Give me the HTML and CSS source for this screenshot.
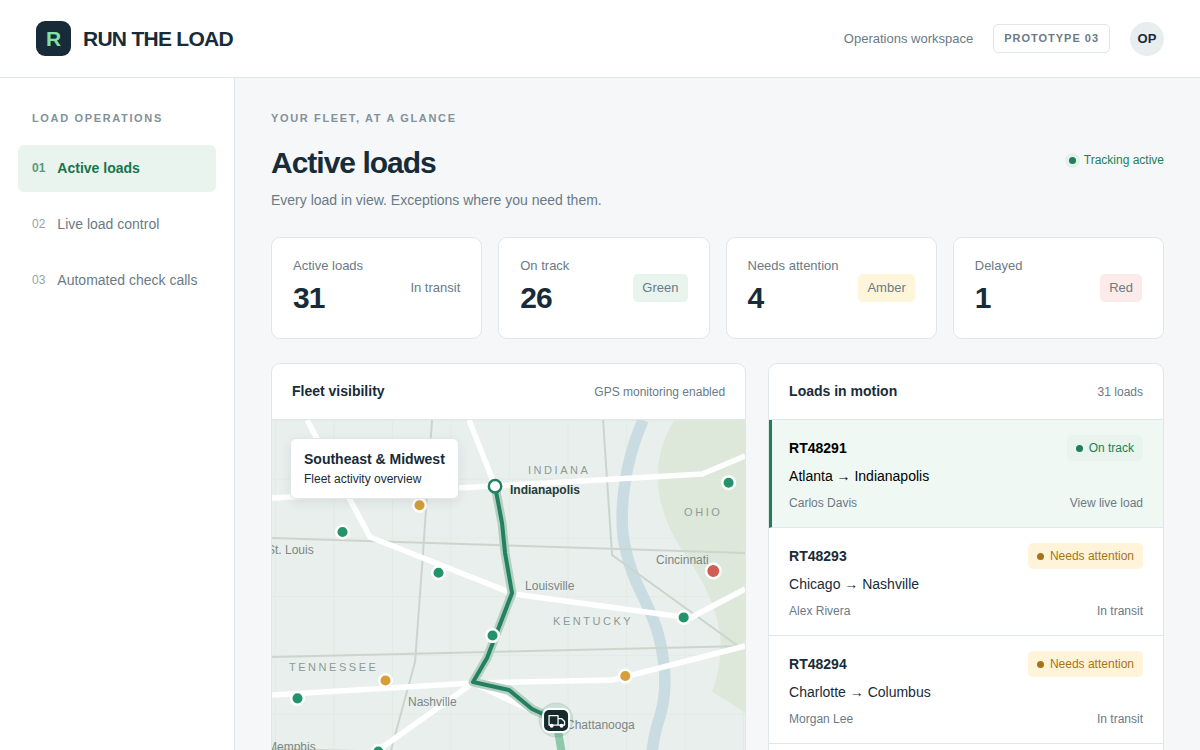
FILE: index.html
```html
<!DOCTYPE html>
<html lang="en">
<head>
<meta charset="utf-8">
<meta name="viewport" content="width=device-width, initial-scale=1">
<title>Run the Load</title>
<link rel="stylesheet" href="styles.css">
</head>
<body>
<header class="topbar">
  <div class="brand"><span class="brand-mark">R</span><span class="brand-name">RUN THE LOAD</span></div>
  <div class="topbar-side">
    <span class="workspace">Operations workspace</span>
    <span class="stage">PROTOTYPE 03</span>
    <span class="avatar">OP</span>
  </div>
</header>
<div class="shell">
  <aside class="sidebar">
    <p class="eyebrow sidebar-label">LOAD OPERATIONS</p>
    <nav class="nav">
      <a class="nav-item is-active" href="#active"><span class="nav-num">01</span>Active loads</a>
      <a class="nav-item" href="#live"><span class="nav-num">02</span>Live load control</a>
      <a class="nav-item" href="#calls"><span class="nav-num">03</span>Automated check calls</a>
    </nav>
  </aside>
  <main class="main">
    <p class="eyebrow">YOUR FLEET, AT A GLANCE</p>
    <div class="heading">
      <div>
        <h1 class="title">Active loads</h1>
        <p class="subtitle">Every load in view. Exceptions where you need them.</p>
      </div>
      <span class="tracking"><i class="pulse"></i>Tracking active</span>
    </div>
    <section class="stats">
      <article class="stat"><div><p class="stat-label">Active loads</p><strong class="stat-value">31</strong></div><span class="stat-note">In transit</span></article>
      <article class="stat"><div><p class="stat-label">On track</p><strong class="stat-value">26</strong></div><span class="stat-note tag green">Green</span></article>
      <article class="stat"><div><p class="stat-label">Needs attention</p><strong class="stat-value">4</strong></div><span class="stat-note tag amber">Amber</span></article>
      <article class="stat"><div><p class="stat-label">Delayed</p><strong class="stat-value">1</strong></div><span class="stat-note tag red">Red</span></article>
    </section>
    <section class="panels">
      <article class="panel">
        <div class="panel-head"><h2 class="panel-title">Fleet visibility</h2><span class="panel-note">GPS monitoring enabled</span></div>
        <div class="map">
          <svg class="map-art" viewBox="272 420 473 430" preserveAspectRatio="xMinYMin slice" role="img" aria-label="Fleet map">
            <defs>
              <pattern id="grid" x="275" y="420" width="58.5" height="58.7" patternUnits="userSpaceOnUse">
                <path class="grid-line" d="M.5 0V59M0 .5H59"/>
              </pattern>
            </defs>
            <rect class="land" x="272" y="420" width="473" height="430"/>
            <path class="forest" d="M674 420C651 459 650 502 685 555C702 577 716 606 720 634C722 655 718 675 712 692Q729 701 745 713V420Z"/>
            <rect x="272" y="420" width="473" height="430" fill="url(#grid)"/>
            <path class="river" d="M643 420C624 463 617 517 626 551C633 585 651 605 659 637C665 663 668 688 660 716Q653 736 651 760"/>
            <g class="minor">
              <path d="M432 420L423 553L415 662L391 750L380 790"/>
              <path d="M272 538L745 553"/>
              <path d="M603 420L612 555L738 646"/>
              <path d="M272 657L745 646"/>
              <path d="M272 749L400 752"/>
            </g>
            <g class="major">
              <path d="M272 498L495 486L702 474L745 456"/>
              <path d="M307 420L370 537L514 594L690 618L745 589"/>
              <path d="M469 420L495 486"/>
              <path d="M272 695L473 683L612 680L745 646"/>
              <path d="M473 683L370 756"/>
              <path d="M473 683L556 722"/>
            </g>
            <path class="ahead" d="M556 720L563 760"/>
            <path class="route-halo" d="M495 486L502 523L505 553L512 593L487 658L473 682L509 690L532 709L556 720"/>
            <path class="route" d="M495 486L502 523L505 553L512 593L487 658L473 682L509 690L532 709L556 720"/>
            <g class="state">
              <text x="528" y="474">INDIANA</text>
              <text x="684" y="516">OHIO</text>
              <text x="553" y="625">KENTUCKY</text>
              <text x="289" y="671">TENNESSEE</text>
            </g>
            <g class="city">
              <text x="267" y="554">St. Louis</text>
              <text x="656" y="564">Cincinnati</text>
              <text x="525" y="590">Louisville</text>
              <text x="408" y="706">Nashville</text>
              <text x="566" y="729">Chattanooga</text>
              <text x="267" y="751">Memphis</text>
              <text class="city-main" x="510" y="494">Indianapolis</text>
            </g>
            <g class="dot dot-green">
              <circle cx="342.500" cy="532" r="6.300"/><circle cx="438.500" cy="572.700" r="6.300"/><circle cx="492.500" cy="635.500" r="6.300"/>
              <circle cx="728.500" cy="482.700" r="6.300"/><circle cx="683.600" cy="617.400" r="6.300"/><circle cx="297.500" cy="698.300" r="6.300"/><circle cx="378.300" cy="751.500" r="6.300"/>
            </g>
            <g class="dot dot-amber"><circle cx="419.500" cy="505.200" r="6.300"/><circle cx="385.500" cy="680.500" r="6.300"/><circle cx="625.200" cy="676" r="6.300"/></g>
            <g class="dot dot-red"><circle cx="713.200" cy="571" r="7.200"/></g>
            <circle class="origin" cx="495" cy="486.300" r="6.200"/>
            <circle class="truck-halo" cx="556" cy="720" r="17"/>
            <rect class="truck-box" x="543" y="709" width="26" height="23" rx="6"/>
            <g class="truck">
              <path d="M549 715.500H558V725H549ZM558 718.500H561.500L564.500 721.500V725H558"/>
              <circle cx="551.600" cy="725.700" r="1.300"/><circle cx="561.500" cy="725.700" r="1.300"/>
            </g>
          </svg>
          <div class="map-card"><strong class="map-card-title">Southeast &amp; Midwest</strong><span class="map-card-note">Fleet activity overview</span></div>
        </div>
      </article>
      <article class="panel">
        <div class="panel-head"><h2 class="panel-title">Loads in motion</h2><span class="panel-note">31 loads</span></div>
        <button class="load is-selected" type="button">
          <span class="load-line load-top"><strong>RT48291</strong><span class="badge badge-green"><i class="bullet"></i>On track</span></span>
          <span class="load-route">Atlanta → Indianapolis</span>
          <span class="load-line load-meta"><span>Carlos Davis</span><span>View live load</span></span>
        </button>
        <button class="load" type="button">
          <span class="load-line load-top"><strong>RT48293</strong><span class="badge badge-amber"><i class="bullet"></i>Needs attention</span></span>
          <span class="load-route">Chicago → Nashville</span>
          <span class="load-line load-meta"><span>Alex Rivera</span><span>In transit</span></span>
        </button>
        <button class="load" type="button">
          <span class="load-line load-top"><strong>RT48294</strong><span class="badge badge-amber"><i class="bullet"></i>Needs attention</span></span>
          <span class="load-route">Charlotte → Columbus</span>
          <span class="load-line load-meta"><span>Morgan Lee</span><span>In transit</span></span>
        </button>
      </article>
    </section>
  </main>
</div>
</body>
</html>
```
FILE: styles.css
```css
* { box-sizing: border-box; }
body {
  margin: 0;
  min-height: 100vh;
  display: flex;
  flex-direction: column;
  background: #f5f7f9;
  color: #182b38;
  font: 14px/16px "Liberation Sans", Arial, sans-serif;
}
p, h1, h2 { margin: 0; }

.topbar {
  display: flex;
  align-items: center;
  justify-content: space-between;
  min-height: 78px;
  padding: 0 36px;
  background: #fff;
  border-bottom: 1px solid #e1e6ea;
}
.brand { display: flex; align-items: center; gap: 12px; }
.brand-mark {
  display: grid;
  place-items: center;
  width: 35px;
  height: 35px;
  border-radius: 9px;
  background: #182b38;
  color: #7ee2a8;
  font-size: 21px;
  font-weight: 700;
}
.brand-name { font-size: 21px; line-height: 24px; font-weight: 700; letter-spacing: -0.035em; }
.topbar-side { display: flex; align-items: center; gap: 20px; }
.workspace { color: #6b7a86; font-size: 13px; }
.stage {
  padding: 6px 10px;
  border: 1px solid #dfe5e9;
  border-radius: 5px;
  color: #6b7a86;
  font-size: 11px;
  line-height: 15px;
  font-weight: 700;
  letter-spacing: 0.09em;
}
.avatar {
  display: grid;
  place-items: center;
  width: 34px;
  height: 34px;
  border-radius: 50%;
  background: #e8edf0;
  font-size: 13px;
  font-weight: 700;
}

.shell { flex: 1; display: grid; grid-template-columns: 235px minmax(0, 1fr); }
.sidebar { padding: 34px 18px; background: #fff; border-right: 1px solid #dfe5ea; }
.eyebrow { color: #83919b; font-size: 11px; line-height: 13px; font-weight: 700; letter-spacing: 0.15em; }
.sidebar-label { padding: 0 14px; }
.nav { display: grid; gap: 9px; margin-top: 20px; }
.nav-item {
  display: flex;
  align-items: center;
  gap: 12px;
  padding: 15px 14px 16px;
  border-radius: 6px;
  color: #6b7a86;
  text-decoration: none;
}
.nav-num { font-size: 12px; opacity: 0.7; }
.nav-item.is-active { background: #e8f4ed; color: #19734d; font-weight: 700; }

.main { padding: 34px 36px; }
.heading { display: flex; justify-content: space-between; align-items: flex-start; margin-top: 20px; }
.title { font-size: 30px; line-height: 36px; letter-spacing: -1px; }
.subtitle { margin-top: 11px; color: #6b7a86; }
.tracking { display: flex; align-items: center; gap: 8px; padding-top: 7px; color: #1d8058; font-size: 12px; }
.pulse { width: 7px; height: 7px; border-radius: 50%; background: #1d8058; box-shadow: 0 0 0 4px #e2f2ea; }

.stats { display: grid; grid-template-columns: repeat(4, minmax(0, 1fr)); gap: 16px; margin-top: 29px; }
.stat {
  display: flex;
  align-items: center;
  justify-content: space-between;
  padding: 20px 21px;
  background: #fff;
  border: 1px solid #e1e6ea;
  border-radius: 9px;
}
.stat-label { color: #6b7a86; font-size: 13px; }
.stat-value { display: block; margin: 6px 0 2px; font-size: 30px; line-height: 36px; letter-spacing: -1px; }
.stat-note { color: #6b7a86; font-size: 13px; }
.tag { padding: 6px 9px; border-radius: 5px; }
.green { background: #e8f4ed; }
.amber { background: #fff5db; }
.red { background: #fcebe9; }

.panels { display: grid; grid-template-columns: minmax(0, 6fr) minmax(0, 5fr); gap: 22px; margin-top: 24px; }
.panel { overflow: hidden; background: #fff; border: 1px solid #e1e6ea; border-radius: 9px; }
.panel-head {
  display: flex;
  align-items: baseline;
  justify-content: space-between;
  padding: 19px 20px 19px;
  border-bottom: 1px solid #e1e6ea;
}
.panel-title { font-size: 14px; }
.panel-note { color: #6b7a86; font-size: 12px; }

.map { position: relative; }
.map-art { display: block; width: 100%; height: 430px; }
.land { fill: #e9efec; }
.grid-line { stroke: #dde8e2; stroke-width: 1; opacity: 0.6; fill: none; }
.forest { fill: #dde8da; }
.river { fill: none; stroke: #c8dce1; stroke-width: 11.500px; }
.minor { fill: none; stroke: #cbd5ce; stroke-width: 2; stroke-linejoin: round; }
.major { fill: none; stroke: #fff; stroke-width: 5.500px; stroke-linejoin: round; }
.route-halo, .route, .ahead { fill: none; stroke-linejoin: round; stroke-linecap: round; }
.route-halo { stroke: #b4d0c1; stroke-width: 9; }
.route { stroke: #238060; stroke-width: 4; }
.ahead { stroke: #8fc8ab; stroke-width: 8; }
.state { fill: #8d9a97; font-size: 11px; letter-spacing: 0.23em; }
.city { fill: #7b8784; font-size: 12px; }
.city-main { fill: #263b37; font-weight: 700; }
.dot { stroke: #fff; stroke-width: 2.500px; }
.dot-green { fill: #23946a; }
.dot-amber { fill: #d69f39; }
.dot-red { fill: #d15d54; }
.origin { fill: #fff; stroke: #238060; stroke-width: 2.500px; }
.truck-halo { fill: #238060; fill-opacity: 0.14; stroke: #238060; stroke-opacity: 0.12; }
.truck-box { fill: #152b2d; stroke: #fff; stroke-width: 2; }
.truck { fill: none; stroke: #fff; stroke-width: 1.300px; stroke-linejoin: round; }
.truck circle { fill: #fff; }
.map-card {
  position: absolute;
  top: 18px;
  left: 18px;
  display: grid;
  gap: 5px;
  padding: 12px 13px;
  background: #fff;
  border: 1px solid #e1e6ea;
  border-radius: 6px;
  box-shadow: 0 4px 12px rgba(24, 43, 56, 0.08);
}
.map-card-note { font-size: 12px; line-height: 14px; }

.load {
  display: grid;
  width: 100%;
  padding: 15px 20px 17px;
  border: 0;
  border-bottom: 1px solid #e1e6ea;
  background: #fff;
  color: #182b38;
  font: inherit;
  text-align: left;
}
.load.is-selected { padding-left: 17px; border-left: 3px solid #1d8058; background: #eff8f3; color: #000; }
.load-line { display: flex; align-items: center; justify-content: space-between; }
.load-route { margin: 7px 0 12px; }
.load-meta { color: #6b7a86; font-size: 12px; line-height: 14px; }
.badge { display: flex; align-items: center; gap: 6px; padding: 6px 9px; border-radius: 5px; font-size: 12px; line-height: 14px; }
.bullet { width: 7px; height: 7px; border-radius: 50%; background: currentColor; }
.badge-green { background: #e8f4ed; color: #1d8058; }
.badge-amber { background: #fff4d9; color: #a87318; }
```
